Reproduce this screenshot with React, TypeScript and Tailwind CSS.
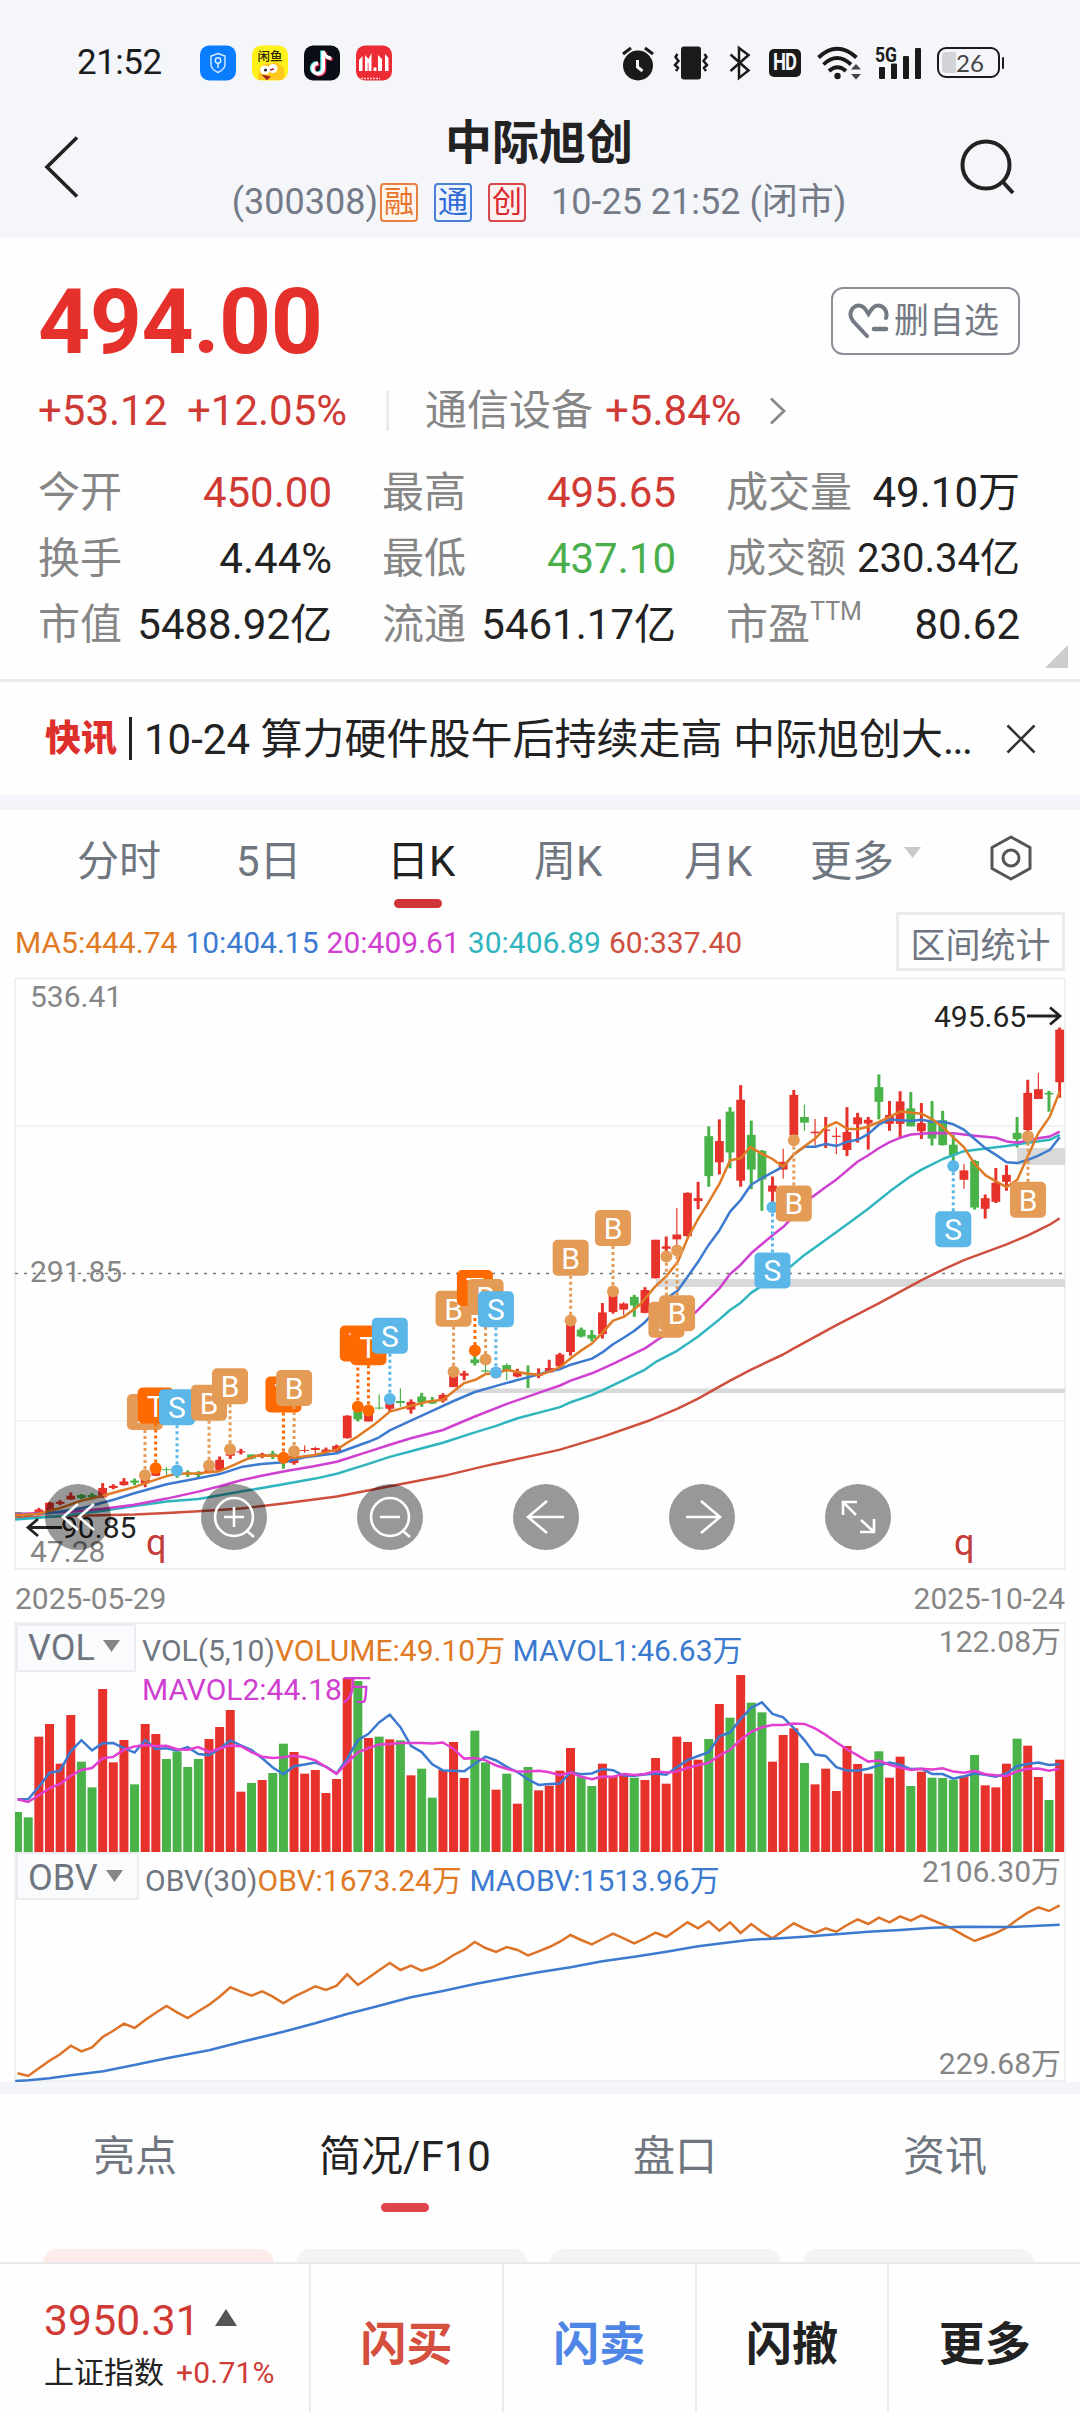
import React from "react";

const RED = "#e6322b";
const GREEN = "#49b34a";
const TAN = "#e39b56";
const ORANGE = "#ff6a00";
const BLUE = "#5bb7e8";

/* ---------- chart data ---------- */

// One letter per trading day: r = up, g = down.
const DAYS =
  "ggrrrrggrrrgrrggggrrrrgrggrrrrrrgrgrgrggrrrggrgrgrrrrggrrrgrrrrrrgrgrggrrrgrrrrrrgrrgrgggrgrrrgrrgr";

const dayX = (i: number) => 17.6 + 10.633 * i;

// high, low, body top, body bottom on the price panel's internal scale
const CANDLES: number[][] = [
  [1328, 1341, 1328, 1341], [1331, 1342, 1331, 1342], [1318, 1336, 1322, 1336], [1303, 1325, 1305, 1325],
  [1299, 1311, 1303, 1308], [1280, 1298, 1288, 1297], [1284, 1296, 1286, 1294], [1281, 1297, 1286, 1292],
  [1257, 1293, 1269, 1292], [1260, 1272, 1264, 1269], [1245, 1263, 1253, 1262], [1246, 1262, 1251, 1256],
  [1235, 1267, 1235, 1258], [1215, 1240, 1215, 1239], [1218, 1238, 1223, 1225], [1225, 1244, 1225, 1238],
  [1226, 1242, 1232, 1236], [1228, 1244, 1233, 1237], [1212, 1231, 1212, 1230], [1192, 1226, 1200, 1226],
  [1175, 1198, 1175, 1190], [1173, 1187, 1179, 1182], [1187, 1199, 1187, 1197], [1183, 1196, 1186, 1193],
  [1178, 1198, 1185, 1193], [1195, 1222, 1195, 1208], [1182, 1212, 1182, 1208], [1165, 1183, 1176, 1178],
  [1168, 1188, 1171, 1176], [1170, 1187, 1175, 1181], [1163, 1181, 1166, 1180], [1091, 1148, 1092, 1147],
  [1075, 1106, 1075, 1101], [1083, 1106, 1083, 1106], [1040, 1077, 1072, 1074], [1055, 1082, 1055, 1075],
  [1025, 1070, 1056, 1061], [1052, 1087, 1058, 1077], [1036, 1070, 1045, 1060], [1046, 1063, 1055, 1062],
  [1037, 1060, 1041, 1055], [985, 1022, 985, 1022], [982, 1005, 988, 994], [945, 969, 954, 963],
  [960, 990, 981, 984], [975, 1000, 975, 998], [963, 1005, 968, 982], [977, 998, 986, 996],
  [969, 1024, 987, 991], [976, 1000, 988, 994], [955, 987, 975, 986], [938, 976, 942, 971],
  [860, 945, 860, 936], [876, 900, 881, 898], [882, 910, 894, 903], [816, 903, 839, 892],
  [787, 842, 787, 838], [813, 846, 817, 832], [796, 850, 801, 822], [777, 841, 784, 840],
  [661, 756, 661, 755], [653, 700, 677, 683], [583, 690, 648, 660], [545, 653, 546, 652],
  [519, 586, 559, 566], [383, 531, 407, 505], [366, 501, 419, 471], [336, 486, 347, 447],
  [282, 531, 318, 516], [369, 537, 404, 489], [441, 590, 443, 513], [506, 590, 528, 543],
  [438, 511, 470, 489], [294, 410, 306, 405], [330, 394, 360, 374], [365, 430, 396, 400],
  [360, 436, 391, 394], [386, 451, 406, 409], [336, 456, 397, 441], [350, 423, 361, 378],
  [360, 440, 367, 376], [256, 366, 287, 323], [321, 394, 355, 377], [297, 412, 322, 377],
  [299, 383, 339, 383], [326, 414, 375, 395], [321, 430, 367, 413], [345, 430, 368, 429],
  [404, 470, 428, 454], [475, 536, 491, 514], [465, 587, 468, 582], [550, 609, 559, 585],
  [485, 571, 521, 568], [478, 541, 502, 519], [360, 435, 399, 414], [269, 400, 301, 392],
  [252, 316, 292, 316], [296, 347, 301, 305], [141, 313, 146, 275],
];
const THIN = [14, 27, 28, 34, 36, 44, 46, 57, 62, 72, 74, 75, 77, 89, 96];

// Internal scale -> pixels inside the price panel.
const py = (t: number) => t / 2.45;
const px = (u: number) => u / 2.9037;

const LINES: { color: string; d: string }[] = [
  {
    color: "#cf4f3e",
    d: "44,1342 200,1338 390,1334 484,1330 576,1326 700,1319 823,1307 978,1290 1132,1265 1286,1240 1410,1215 1568,1186 1626,1175 1749,1144 1888,1103 1966,1075 2027,1050 2089,1021 2120,1006 2181,979 2274,942 2305,927 2429,870 2553,816 2676,760 2738,734 2799,711 2923,672 2985,650 3048,624 3077,608",
  },
  {
    color: "#2fb5bd",
    d: "44,1346 113,1342 200,1335 300,1325 390,1313 484,1302 576,1296 700,1278 823,1260 915,1246 978,1234 1070,1210 1132,1193 1193,1179 1286,1158 1379,1133 1441,1117 1503,1098 1568,1084 1626,1071 1657,1059 1719,1041 1749,1030 1811,1005 1873,979 1903,961 1966,933 2027,898 2089,856 2120,833 2151,815 2181,791 2212,774 2274,742 2336,698 2398,661 2460,623 2521,585 2583,543 2645,505 2676,489 2738,463 2799,444 2862,437 2923,431 2985,423 3048,416 3077,404",
  },
  {
    color: "#cf3fd0",
    d: "44,1333 200,1328 300,1320 390,1310 484,1295 576,1278 638,1265 700,1250 760,1239 823,1229 915,1215 978,1205 1070,1180 1132,1163 1193,1147 1286,1127 1379,1094 1472,1063 1568,1035 1626,1018 1657,1006 1719,988 1780,965 1873,927 1918,901 1968,880 2018,840 2089,780 2120,745 2151,722 2181,694 2243,650 2274,630 2305,603 2336,570 2398,532 2429,513 2490,470 2521,454 2553,436 2583,422 2614,411 2645,403 2707,399 2768,400 2830,406 2892,411 2923,420 2954,423 3015,412 3048,408 3077,396",
  },
  {
    color: "#3c7ad0",
    d: "44,1336 150,1330 240,1318 330,1298 390,1282 484,1260 545,1250 638,1235 700,1218 760,1210 823,1206 885,1194 978,1184 1070,1156 1101,1145 1132,1128 1193,1104 1255,1080 1317,1056 1379,1034 1441,1019 1500,1005 1568,990 1595,983 1626,978 1657,967 1719,952 1749,937 1780,917 1811,901 1842,884 1873,863 1935,805 1968,785 1998,750 2027,715 2058,673 2089,638 2120,592 2151,563 2181,526 2212,510 2243,496 2274,482 2305,452 2336,433 2367,433 2398,426 2429,431 2460,421 2490,416 2521,402 2553,378 2583,366 2645,370 2676,367 2707,372 2738,372 2768,378 2799,391 2830,414 2862,437 2892,453 2923,471 2954,473 2985,465 3015,455 3048,441 3077,410",
  },
  {
    color: "#e07a24",
    d: "44,1336 113,1332 175,1318 237,1300 300,1288 345,1277 390,1267 422,1257 484,1240 514,1234 576,1233 638,1228 668,1217 715,1199 745,1190 800,1190 854,1195 915,1188 978,1175 1008,1158 1040,1142 1085,1115 1132,1082 1193,1068 1240,1058 1286,1053 1348,1012 1380,1004 1410,990 1441,988 1472,980 1533,989 1568,992 1595,984 1626,973 1657,951 1688,932 1719,915 1749,889 1780,859 1811,850 1858,820 1903,775 1935,750 1968,715 1998,655 2027,610 2058,568 2089,524 2120,466 2151,461 2178,434 2212,450 2243,463 2274,482 2305,452 2336,432 2367,413 2398,385 2429,373 2460,389 2490,390 2521,384 2553,372 2583,360 2614,347 2676,352 2707,366 2738,385 2768,410 2799,434 2830,475 2862,503 2892,518 2923,532 2954,514 2985,455 3015,400 3048,360 3077,298",
  },
];

type Mark = { k: "B" | "T" | "S"; x: number; tag: number; dot: number };
const MARKS: Mark[] = [
  { k: "B", x: 421, tag: 1083, dot: 1238 },
  { k: "T", x: 452, tag: 1067, dot: 1221 },
  { k: "S", x: 514, tag: 1071, dot: 1226 },
  { k: "B", x: 607, tag: 1060, dot: 1214 },
  { k: "B", x: 668, tag: 1020, dot: 1174 },
  { k: "T", x: 823, tag: 1040, dot: 1195 },
  { k: "B", x: 854, tag: 1024, dot: 1179 },
  { k: "T", x: 1039, tag: 915, dot: 1070 },
  { k: "T", x: 1070, tag: 924, dot: 1079 },
  { k: "S", x: 1132, tag: 896, dot: 1051 },
  { k: "B", x: 1317, tag: 830, dot: 984 },
  { k: "T", x: 1379, tag: 779, dot: 932 },
  { k: "B", x: 1410, tag: 801, dot: 954 },
  { k: "S", x: 1440, tag: 831, dot: 986 },
  { k: "B", x: 1657, tag: 705, dot: 859 },
  { k: "B", x: 1780, tag: 632, dot: 787 },
  { k: "B", x: 1935, tag: 857, dot: 702 },
  { k: "B", x: 1966, tag: 841, dot: 687 },
  { k: "S", x: 2243, tag: 736, dot: 581 },
  { k: "B", x: 2305, tag: 572, dot: 417 },
  { k: "S", x: 2768, tag: 635, dot: 480 },
  { k: "B", x: 2985, tag: 563, dot: 408 },
];
const MARK_COLOR = { B: TAN, T: ORANGE, S: BLUE };

// Bar tops in thirds of a pixel; the panel's base line is at 726.
const VOL = [
  606, 622, 380, 342, 461, 315, 455, 532, 237, 457, 390, 523, 342, 372, 447, 424, 471, 447, 387, 351, 300, 545, 519,
  510, 489, 401, 426, 491, 480, 549, 507, 204, 213, 384, 380, 388, 391, 496, 476, 563, 480, 396, 504, 362, 457, 539,
  491, 581, 471, 541, 527, 482, 414, 500, 528, 461, 500, 494, 503, 510, 444, 521, 380, 396, 449, 387, 282, 323, 195,
  278, 307, 455, 375, 355, 459, 523, 476, 543, 408, 462, 491, 424, 503, 440, 528, 485, 503, 504, 509, 497, 435, 526,
  532, 461, 386, 407, 501, 570, 449,
];

function average(n: number, head: number[]) {
  return VOL.map((_, i) => {
    if (i < n - 1) return head[i];
    let sum = 0;
    for (let k = i - n + 1; k <= i; k++) sum += VOL[k];
    return sum / n;
  });
}
const MAVOL1 = average(5, [568, 568, 530, 489]);
const MAVOL2 = average(10, [568, 576, 556, 535, 522, 497, 480, 474, 445]);

const OBV = [
  1390, 1398, 1375, 1352, 1333, 1307, 1324, 1312, 1281, 1262, 1241, 1254, 1230, 1208, 1188, 1207, 1224, 1204, 1184,
  1160, 1132, 1145, 1157, 1144, 1160, 1180, 1160, 1145, 1129, 1140, 1127, 1093, 1125, 1103, 1081, 1059, 1080, 1067,
  1082, 1072, 1056, 1035, 1019, 996, 1014, 1026, 1011, 1020, 1036, 1024, 1011, 995, 975, 990, 1003, 987, 971, 985,
  1000, 985, 968, 981, 959, 937, 955, 934, 962, 937, 969, 942, 966, 985, 962, 940, 956, 969, 955, 965, 945, 928, 942,
  923, 937, 919, 932, 916, 930, 943, 958, 976, 993, 981, 969, 953, 929, 908, 892, 903, 886,
];
const MAOBV =
  "44,1413 82,1411 144,1405 206,1396 300,1384 390,1365 484,1345 607,1321 700,1296 823,1265 915,1240 1008,1212 1101,1187 1193,1162 1286,1143 1379,1122 1472,1104 1564,1087 1657,1072 1749,1054 1842,1040 1935,1025 2027,1009 2120,997 2181,989 2243,986 2336,980 2429,973 2521,965 2614,960 2707,953 2799,950 2923,951 2985,949 3077,944";

const series = (ys: number[], f: (y: number) => number) => ys.map((y, i) => `${dayX(i).toFixed(1)},${f(y).toFixed(1)}`).join(" ");
const remap = (d: string, f: (y: number) => number) =>
  d
    .split(" ")
    .map((p) => {
      const [u, t] = p.split(",").map(Number);
      return `${px(u).toFixed(1)},${f(t).toFixed(1)}`;
    })
    .join(" ");

/* ---------- header ---------- */

function StatusBar() {
  return (
    <div className="flex h-[118px] items-center pt-[7px]">
      <span className="ml-[77px] w-[123px] text-[35px] leading-none tracking-[-.5px] text-[#1c1c1c]">21:52</span>
      <div className="flex gap-4">
        <svg className="size-9" viewBox="0 0 36 36">
          <rect width="36" height="35" y=".5" rx="9" fill="#0a7cff" />
          <path d="M18 8.500l7 2.600v8.400c0 3.600-3 6-7 8-4-2-7-4.400-7-8v-8.400z" fill="none" stroke="#d8ecff" strokeWidth="1.400" />
          <circle cx="18" cy="15.500" r="2.700" fill="none" stroke="#d8ecff" strokeWidth="1.500" />
          <path d="M18 18v5" stroke="#d8ecff" strokeWidth="1.500" />
        </svg>
        <svg className="size-9 rounded-[9px]" viewBox="0 0 36 36">
          <rect width="36" height="35" y=".5" rx="9" fill="#fff21a" />
          <path d="M6 35c0-7 1-10 2-12 2-4 6-5 10-4 4-3 9-2 10 1 3 1 5 4 4 8 1 3 0 5-2 7z" fill="#ffc81e" />
          <ellipse cx="13" cy="25" rx="5" ry="4.500" fill="#fff" />
          <ellipse cx="21" cy="23.500" rx="4.500" ry="4.500" fill="#fff" />
          <circle cx="13.500" cy="25" r="1.500" fill="#222" />
          <path d="M18 25l4-1M12 31l5 1-2 2z" stroke="#a2231d" strokeWidth="1.800" fill="#a2231d" />
          <text x="18" y="16" fontSize="12.500" fontWeight="500" textAnchor="middle" fill="#2a2600">闲鱼</text>
        </svg>
        <svg className="size-9" viewBox="0 0 36 36">
          <rect width="36" height="35" y=".5" rx="9" fill="#0a0c16" />
          <g fill="none" strokeWidth="3.600">
            <path d="M18 5.500v17.500a5.200 5.200 0 1 1-5.200-5.200M18 5.500c.5 4 3.500 7 8 7.200" stroke="#3de8e4" />
            <path d="M20.500 7v17.500a5.200 5.200 0 1 1-5.200-5.200M20.500 7c.5 4 3.500 7 8 7.200" stroke="#f8385c" />
            <path d="M19.200 6v17.500a5.200 5.200 0 1 1-5.200-5.200M19.200 6c.5 4 3.500 7 8 7.200" stroke="#fff" />
          </g>
        </svg>
        <svg className="size-9" viewBox="0 0 36 36">
          <rect width="36" height="35" y=".5" rx="9" fill="#ec2b35" />
          <path d="M3 15l3.500-4v15h-3.500zM9 26V10l3.500 4 3-6v18h-3v-8l-.800 0v8zM22 26V10l4 4v12zM29 26V9l3.500 4v13z" fill="#fff" />
          <rect x="17.500" y="22.500" width="3" height="3.500" fill="#fff" />
          <path d="M5 33.500h19" stroke="#ffd3d3" strokeWidth="1.500" strokeDasharray="2 1" />
        </svg>
      </div>
      <div className="ml-[230px] flex items-center text-[#1a1a1a]">
        <svg className="h-9 w-8" viewBox="0 0 32 36" fill="none">
          <circle cx="16" cy="20.500" r="15" fill="#1a1a1a" />
          <path d="M1 9l8-6M31 9l-8-6" stroke="#1a1a1a" strokeWidth="3" />
          <path d="M15.500 15v7l5 4" stroke="#f4f6fa" strokeWidth="3" />
        </svg>
        <svg className="ml-[19px] h-9 w-9" viewBox="0 0 36 36" fill="none">
          <rect x="8" y="1.500" width="20" height="33" rx="3" fill="#1a1a1a" />
          <path d="M4.500 9l-2 3 3 4-3.500 4 3 3-2 3M31.500 9l2 3-3 4 3.500 4-3 3 2 3" stroke="#1a1a1a" strokeWidth="2.500" />
        </svg>
        <svg className="ml-5 h-9 w-[22px]" viewBox="0 0 22 36" fill="none">
          <path d="M1.500 9.500l18 16L10 33V3l9.500 7-18 16" stroke="#1a1a1a" strokeWidth="2.500" />
        </svg>
        <span className="ml-[18px] flex h-7 w-8 items-center justify-center rounded-[5px] bg-[#1a1a1a] text-[23px] leading-none font-bold tracking-[-1px] text-[#f4f6fa]">
          <span className="scale-x-[.8]">HD</span>
        </span>
        <svg className="ml-4 h-9 w-[45px]" viewBox="0 0 45 36" fill="none">
          <path d="M1.500 12.500Q20 -5 39.500 12.500M6.500 19.500Q20 6.500 34 19.500M12 26Q20.500 18.500 29 26" stroke="#1a1a1a" strokeWidth="3.800" />
          <circle cx="20.500" cy="31" r="3.200" fill="#1a1a1a" />
          <path d="M34 24.500l5-5.500 5 5.500zM34 29h10l-5 5.500z" fill="#444" />
        </svg>
        <svg className="ml-[13px] h-9 w-12 overflow-visible" viewBox="0 0 48 36">
          <text x="0" y="17" fontSize="21" fontWeight="700" textLength="22" lengthAdjust="spacingAndGlyphs" fill="#1a1a1a">5G</text>
          <rect x="4" y="22" width="6" height="12" rx="1" fill="#1a1a1a" />
          <rect x="16" y="18.500" width="6" height="15.500" rx="1" fill="#1a1a1a" />
          <rect x="28" y="11" width="6" height="23" rx="1" fill="#1a1a1a" />
          <rect x="40" y="3" width="6" height="31" rx="1" fill="#1a1a1a" />
        </svg>
        <div className="ml-[14px] flex h-[31px] w-[63px] items-center rounded-[9px] border-2 border-[#1a1a1a] p-[3px]">
          <span className="h-full w-[14px] rounded-l-[4px] bg-[#d2d4d8]" />
          <span className="font-[Lato,Roboto,sans-serif] text-[24px] leading-none text-[#444]">26</span>
        </div>
        <span className="ml-[2px] h-3 w-[2px] rounded bg-[#1a1a1a]" />
      </div>
    </div>
  );
}

function Tag({ children, className }: { children: string; className: string }) {
  return (
    <span className={`flex h-[39px] w-[38px] items-center justify-center rounded-[4px] border-2 text-[30px] leading-none ${className}`}>
      {children}
    </span>
  );
}

function TitleBar() {
  return (
    <div className="flex h-[120px] items-start justify-between">
      <svg className="mt-[17px] ml-[43px] h-[64px] w-[38px]" viewBox="0 0 38 64" fill="none">
        <path d="M34 2.500L4 32l30 29.500" stroke="#222" strokeWidth="3.600" />
      </svg>
      <div className="flex flex-col items-center pl-[39px]">
        <h1 className="h-[50px] text-[47px] leading-[50px] font-bold text-[#222]">中际旭创</h1>
        <div className="mt-[10px] flex h-12 items-center text-[36px] leading-none text-[#747a86]">
          <span>(300308)</span>
          <Tag className="ml-[2px] border-[#e98142] bg-[#fdf4ee] text-[#e8742a]">融</Tag>
          <Tag className="ml-4 border-[#4a7fd6] bg-[#f0f5fd] text-[#2f6bd8]">通</Tag>
          <Tag className="ml-4 border-[#d9484c] bg-[#fdf0f1] text-[#d8282e]">创</Tag>
          <span className="ml-[25px]">10-25 21:52 (闭市)</span>
        </div>
      </div>
      <svg className="mt-[18px] mr-[60px] h-[62px] w-[62px]" viewBox="0 0 62 62" fill="none">
        <circle cx="28" cy="29" r="23.500" stroke="#222" strokeWidth="4" />
        <path d="M45 46l10 11" stroke="#222" strokeWidth="4" />
      </svg>
    </div>
  );
}

/* ---------- quote ---------- */

type Stat = { label: string; value: string; tone: string; sup?: string; compact?: boolean };
const STATS: Stat[][] = [
  [
    { label: "今开", value: "450.00", tone: "text-[#d03a35]" },
    { label: "最高", value: "495.65", tone: "text-[#d03a35]" },
    { label: "成交量", value: "49.10万", tone: "text-[#222]" },
  ],
  [
    { label: "换手", value: "4.44%", tone: "text-[#222]" },
    { label: "最低", value: "437.10", tone: "text-[#4aae4c]" },
    { label: "成交额", value: "230.34亿", tone: "text-[#222]", compact: true },
  ],
  [
    { label: "市值", value: "5488.92亿", tone: "text-[#222]" },
    { label: "流通", value: "5461.17亿", tone: "text-[#222]" },
    { label: "市盈", value: "80.62", tone: "text-[#222]", sup: "TTM" },
  ],
];

function Quote() {
  return (
    <section className="relative h-[444px] border-b-[3px] border-[#ebebeb] pt-[49px] pr-[60px] pl-[38px]">
      <div className="flex h-[68px] items-center justify-between">
        <span className="pt-[2px] text-[91px] leading-none font-bold tracking-[-.5px] text-[#e6302b]">494.00</span>
        <button className="flex h-[68px] w-[189px] items-center rounded-[12px] border-2 border-[#8a8f98] pl-[15px] text-[35px] leading-none text-[#747a83]">
          <svg className="mr-[4px] h-[36px] w-[42px]" viewBox="0 0 42 36" fill="none" stroke="#747a83" strokeWidth="4" strokeLinecap="round">
            <path d="M19 33L5 18C-1 10 5 2.500 11 2.500c4 0 6 3 9.500 8.500C24 5.500 26 2.500 30 2.500c6 0 10 6 8 12.500" />
            <path d="M26 26h12" strokeWidth="4.500" />
          </svg>
          删自选
        </button>
      </div>
      <div className="mt-[30px] flex h-[52px] items-center text-[42px] leading-none text-[#d03a35]">
        <span className="w-[149px]">+53.12</span>
        <span className="w-[199px]">+12.05%</span>
        <span className="h-10 w-[3px] bg-[#e9ebf0]" />
        <span className="ml-[36px] text-[#868686]">通信设备</span>
        <span className="ml-[12px]">+5.84%</span>
        <svg className="ml-[27px] h-7 w-[18px]" viewBox="0 0 18 28" fill="none">
          <path d="M2 1.500l13 12.500L2 26.500" stroke="#888" strokeWidth="2.800" />
        </svg>
      </div>
      <div className="mt-[23px] grid text-[42px]">
        {STATS.map((row, r) => (
          <div key={r} className="grid h-[66px] grid-cols-3 gap-x-[50px]">
            {row.map((s) => (
              <div
                key={s.label}
                className={`flex items-center justify-between leading-none whitespace-nowrap ${s.compact ? "text-[40px]" : ""}`}
              >
                <span className="flex text-[#868686]">
                  {s.label}
                  {s.sup && <span className="-mt-[5px] text-[25px] leading-none">{s.sup}</span>}
                </span>
                <span className={s.tone}>{s.value}</span>
              </div>
            ))}
          </div>
        ))}
      </div>
      <svg className="absolute right-[12px] bottom-[11px] h-[23px] w-[23px]" viewBox="0 0 23 23">
        <path d="M23 0v23H0z" fill="#ccc" />
      </svg>
    </section>
  );
}

function News() {
  return (
    <div className="flex h-[113px] items-center pl-[45px] text-[42px] leading-none text-[#222]">
      <span className="text-[36px] font-black text-[#dd2f2c]">快讯</span>
      <span className="ml-[12px] h-[43px] w-[3px] bg-[#222]" />
      <span className="ml-[12px] w-[832px] pt-[3px] leading-[52px] whitespace-nowrap">
        10-24 算力硬件股午后持续走高 中际旭创大<span className="tracking-[-1.500px]">...</span>
      </span>
      <svg className="ml-[30px] h-[30px] w-[30px]" viewBox="0 0 30 30">
        <path d="M1.500 1.500l27 27M28.500 1.500l-27 27" stroke="#333" strokeWidth="2.600" />
      </svg>
    </div>
  );
}

/* ---------- charts ---------- */

function PeriodTabs() {
  return (
    <div className="flex h-[97px] items-center pt-[5px] text-[42px] leading-none text-[#707680]">
      <span className="ml-[77px] w-[159px]">分时</span>
      <span className="w-[151px]">5日</span>
      <span className="relative w-[147px] text-[#222]">
        日K
        <span className="absolute top-[58px] left-[7px] h-[9px] w-12 rounded-full bg-[#d03436]" />
      </span>
      <span className="w-[150px]">周K</span>
      <span className="w-[126px]">月K</span>
      <span className="w-[94px]">更多</span>
      <svg className="mb-[19px] h-[11px] w-[17px]" viewBox="0 0 17 11">
        <path d="M0 0h17l-8.500 11z" fill="#c9c9c9" />
      </svg>
      <svg className="mb-[8px] ml-[68px] h-[46px] w-[44px]" viewBox="0 0 44 46" fill="none" stroke="#555" strokeWidth="3">
        <path d="M22 2l19 10.500v21L22 44 3 33.500v-21z" strokeLinejoin="round" />
        <circle cx="22" cy="23" r="8" />
      </svg>
    </div>
  );
}

function MaRow() {
  return (
    <div className="flex h-[62px] items-start justify-between pr-[15px] pl-[15px] text-[30px]">
      <div className="flex gap-[8px] leading-[65px] whitespace-nowrap">
        <span className="text-[#e07a24]">MA5:444.74</span>
        <span className="text-[#3c7ad0]">10:404.15</span>
        <span className="text-[#cf3fd0]">20:409.61</span>
        <span className="text-[#2fb5bd]">30:406.89</span>
        <span className="text-[#cf4f3e]">60:337.40</span>
      </div>
      <span className="mt-[2px] flex h-[59px] w-[169px] items-center justify-center border-[3px] border-[#ebebeb] pt-[9px] text-[35px] leading-none whitespace-nowrap text-[#707680]">
        区间统计
      </span>
    </div>
  );
}

function Candles() {
  return (
    <g>
      {CANDLES.map(([hi, lo, top, bottom], i) => {
        const color = DAYS[i] === "r" ? RED : GREEN;
        const x = dayX(i);
        const wick = THIN.includes(i) ? 1.2 : 3;
        return (
          <g key={i} fill={color}>
            <rect x={x - wick / 2} y={py(hi)} width={wick} height={py(lo - hi)} />
            <rect x={Math.max(x - 4.4, 15)} y={py(top)} width={i ? 8.8 : 7} height={Math.max(py(bottom - top), 1)} />
          </g>
        );
      })}
    </g>
  );
}

function ControlButton({ children }: { children: React.ReactNode }) {
  return (
    <button className="size-[66px] rounded-full bg-black/40">
      <svg viewBox="0 0 66 66" fill="none" stroke="#fff" strokeWidth="2.600">
        {children}
      </svg>
    </button>
  );
}

function PriceChart() {
  return (
    <div className="relative h-[607px]">
      <svg className="block h-[607px] w-[1080px]" viewBox="0 0 1080 607" fill="none">
        <rect x="15" y="8.500" width="1050" height="590.500" stroke="#f0f0f0" strokeWidth="2" />
        <path d="M15 156h1050M15 451h1050" stroke="#efefef" strokeWidth="1.500" />
        <path d="M15 303.500h1050" stroke="#777" strokeWidth="1.500" strokeDasharray="3 6" />
        <rect x="454" y="418.500" width="611" height="4.500" fill="#d9d9d9" />
        <rect x="656" y="309" width="409" height="8" fill="#d9d9d9" />
        <rect x="1017" y="178" width="48" height="17" fill="#d9d9d9" />
        <g fill="#868686" fontSize="30">
          <text x="30" y="37">536.41</text>
          <text x="30" y="312">291.85</text>
          <text x="30" y="591.500">47.28</text>
        </g>
        <Candles />
        {LINES.map((l) => (
          <polyline key={l.color} points={remap(l.d, py)} stroke={l.color} strokeWidth="2.500" strokeLinejoin="round" />
        ))}
        {MARKS.map((m, i) => {
          const c = MARK_COLOR[m.k];
          const x = px(m.x);
          const tag = py(m.tag);
          const dot = py(m.dot);
          return (
            <g key={i}>
              <path d={`M${x} ${tag}V${dot}`} stroke={c} strokeWidth="3" strokeDasharray="3 3" />
              <circle cx={x} cy={dot} r="6" fill={c} />
              <rect x={x - 18} y={tag - 18} width="36" height="36" rx="5" fill={c} />
              <text x={x} y={tag + 11} fontSize="30" textAnchor="middle" fill="#fff">
                {m.k}
              </text>
            </g>
          );
        })}
        <text x="934" y="57" fontSize="30" fill="#222">495.65</text>
        <path d="M1027 46h32M1050 37.500l10 8.500-10 8.500" stroke="#222" strokeWidth="2.800" />
        <path d="M62 557.500H29M38 549l-10 8.500 10 8.500" stroke="#222" strokeWidth="2.800" />
        <text x="61" y="568" fontSize="30" fill="#222">90.85</text>
        <g fontSize="36" fill="#c43c3a">
          <text x="146" y="585">q</text>
          <text x="954" y="585">q</text>
        </g>
      </svg>
      <div className="absolute top-[514px] left-[45px] flex gap-[90px]">
        <ControlButton>
          <path d="M33 20L18 33l15 13M49 20L34 33l15 13" />
        </ControlButton>
        <ControlButton>
          <circle cx="33" cy="33" r="19" />
          <path d="M23 33h20M33 23v20M46 47l7 6" />
        </ControlButton>
        <ControlButton>
          <circle cx="33" cy="33" r="19" />
          <path d="M23 33h20M46 47l7 6" />
        </ControlButton>
        <ControlButton>
          <path d="M51 33H16M34 17L15 33l19 16" />
        </ControlButton>
        <ControlButton>
          <path d="M17 33h35M32 17l19 16-19 16" />
        </ControlButton>
        <ControlButton>
          <path d="M31 31L18 18M18 31V18h14M36 36l13 12M49 35v13H35" />
        </ControlButton>
      </div>
    </div>
  );
}

function Picker({ name, className }: { name: string; className: string }) {
  return (
    <span className={`flex h-[48px] items-center justify-between border-[2px] border-[#ebecf0] bg-[#fafbfc] pr-[14px] leading-none text-[36px] text-[#707680] ${className}`}>
      {name}
      <svg className="mb-[4px] h-3 w-[17px]" viewBox="0 0 17 12">
        <path d="M0 0h17l-8.500 12z" fill="#858585" />
      </svg>
    </span>
  );
}

function VolumePanel() {
  return (
    <div className="relative ml-[14px] h-[230px] w-[1052px] border-x-2 border-t-2 border-[#f0f0f0]">
      <svg className="absolute -top-[2px] -left-4 h-[230px] w-[1080px]" viewBox="0 0 1080 230" fill="none">
        {VOL.map((t, i) => (
          <rect
            key={i}
            x={i ? dayX(i) - 4.5 : 15}
            y={t / 3 - 12}
            width={i ? 9 : 7}
            height={242 - t / 3}
            fill={DAYS[i] === "r" ? RED : GREEN}
          />
        ))}
        <polyline points={series(MAVOL1, (y) => y / 3 - 12)} stroke="#3c7ad0" strokeWidth="2.500" />
        <polyline points={series(MAVOL2, (y) => y / 3 - 12)} stroke="#e23fd0" strokeWidth="2.500" />
      </svg>
      <div className="relative flex items-start text-[30px] leading-[39px]">
        <Picker name="VOL" className="w-[120px] pl-[10px]" />
        <div className="ml-[6px] w-[660px] pt-[7px]">
          <span className="text-[#707680]">VOL(5,10)</span>
          <span className="text-[#e07a24]">VOLUME:49.10万</span> <span className="text-[#3c7ad0]">MAVOL1:46.63万</span>
          <div className="text-[#cf3fd0]">MAVOL2:44.18万</div>
        </div>
        <span className="ml-auto pr-[3px] leading-[36px] text-[#868686]">122.08万</span>
      </div>
    </div>
  );
}

function ObvPanel() {
  return (
    <div className="relative ml-[14px] flex h-[230px] w-[1052px] flex-col justify-between border-x-2 border-b-2 border-[#f0f0f0]">
      <svg className="absolute top-0 -left-4 h-[230px] w-[1080px]" viewBox="0 0 1080 230" fill="none">
        <polyline points={series(OBV, (y) => y / 3 - 242)} stroke="#dd7328" strokeWidth="2.500" />
        <polyline points={remap(MAOBV, (y) => y / 3 - 242)} stroke="#3c7ad0" strokeWidth="2.500" />
      </svg>
      <div className="relative flex items-start text-[30px] leading-[38px]">
        <Picker name="OBV" className="w-[123px] pt-[3px] pl-[10px]" />
        <div className="ml-[6px] pt-[10px]">
          <span className="text-[#707680]">OBV(30)</span>
          <span className="text-[#e07a24]">OBV:1673.24万</span> <span className="text-[#3c7ad0]">MAOBV:1513.96万</span>
        </div>
        <span className="ml-auto pr-[3px] leading-[40px] text-[#868686]">2106.30万</span>
      </div>
      <span className="relative self-end pr-[3px] text-[30px] leading-[32px] text-[#868686]">229.68万</span>
    </div>
  );
}

/* ---------- bottom ---------- */

function InfoTabs() {
  return (
    <div className="h-[168px] overflow-hidden">
      <div className="grid h-[155px] grid-cols-4 text-center text-[42px] leading-[125px] text-[#707680]">
        <span>亮点</span>
        <span className="flex flex-col items-center text-[#222]">
          简况/F10
          <span className="-mt-[16px] h-[9px] w-12 rounded-full bg-[#e0444b]" />
        </span>
        <span>盘口</span>
        <span>资讯</span>
      </div>
      <div className="grid grid-cols-4 gap-x-[22px] pr-[46px] pl-[43px]">
        <span className="h-8 rounded-[14px] bg-[#fdecea]" />
        <span className="h-8 rounded-[14px] bg-[#f4f4f4]" />
        <span className="h-8 rounded-[14px] bg-[#f4f4f4]" />
        <span className="h-8 rounded-[14px] bg-[#f4f4f4]" />
      </div>
    </div>
  );
}

function TradeBar() {
  return (
    <div className="flex h-[150px] border-t-2 border-[#e8e8e8] text-[46px] font-bold text-[#222]">
      <div className="w-[309px] pt-[33px] pl-[44px] font-normal">
        <div className="flex h-[48px] items-center text-[42.500px] leading-none tracking-[.2px] text-[#d03a35]">
          3950.31
          <svg className="mb-[8px] ml-[15px] h-[17px] w-[22px]" viewBox="0 0 22 17">
            <path d="M11 0l11 17H0z" fill="#555" />
          </svg>
        </div>
        <div className="mt-[10px] flex h-[36px] items-center text-[30px] leading-none">
          上证指数 <span className="ml-[12px] tracking-[.2px] text-[#d03a35]">+0.71%</span>
        </div>
      </div>
      <div className="grid flex-1 grid-cols-4 text-center leading-[160px]">
        <span className="border-l-2 border-[#ebebeb] text-[#d44f3d]">闪买</span>
        <span className="border-l-2 border-[#ebebeb] text-[#4f86e6]">闪卖</span>
        <span className="border-l-2 border-[#ebebeb]">闪撤</span>
        <span className="border-l-2 border-[#ebebeb]">更多</span>
      </div>
    </div>
  );
}

export default function App() {
  return (
    <div className="flex h-[2412px] w-[1080px] flex-col overflow-hidden bg-[#fefefe] font-[Roboto,'Noto_Sans_CJK_SC',sans-serif]">
      <header className="bg-[#f4f6fa]">
        <StatusBar />
        <TitleBar />
      </header>
      <Quote />
      <News />
      <div className="h-[15px] bg-[#f3f5fa]" />
      <div className="pt-[1px] pb-[2px]">
        <PeriodTabs />
      </div>
      <MaRow />
      <div className="-mt-[2px]">
        <PriceChart />
      </div>
      <div className="flex h-[45px] items-center justify-between pr-[15px] pb-[1px] pl-[15px] text-[30px] leading-none text-[#868686]">
        <span>2025-05-29</span>
        <span>2025-10-24</span>
      </div>
      <VolumePanel />
      <ObvPanel />
      <div className="h-[12px] bg-[#f3f5fa]" />
      <InfoTabs />
      <TradeBar />
    </div>
  );
}
